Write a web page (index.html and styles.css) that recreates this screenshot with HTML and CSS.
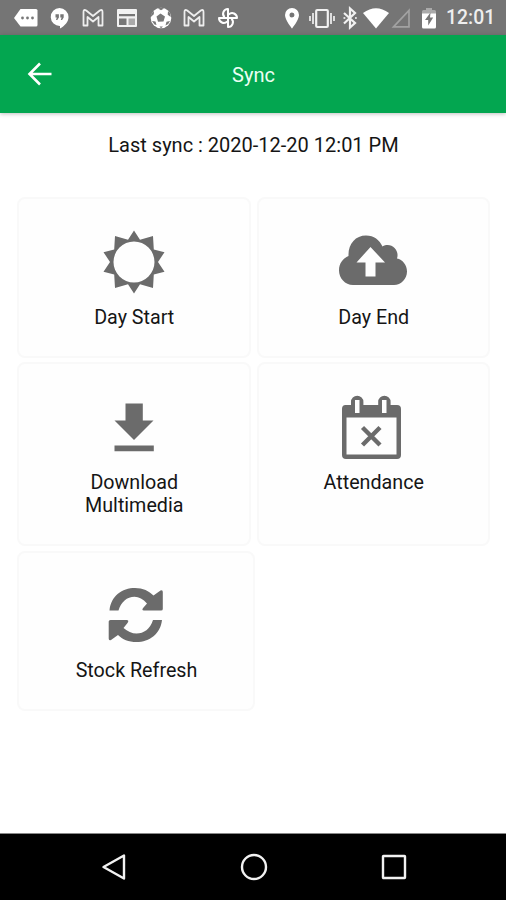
FILE: index.html
```html
<!DOCTYPE html>
<html lang="en">
<head>
<meta charset="utf-8">
<title>Sync</title>
<link rel="stylesheet" href="styles.css">
</head>
<body>
<div class="screen">
  <div class="status-bar">
    <div class="notifications">
      <svg width="24" height="24" viewBox="0 0 24 24"><path fill="#fff" d="M6.500 3H22Q23.500 3 23.500 4.500V19Q23.500 20.500 22 20.500H6.500L0 12Z"/><g fill="#777"><circle cx="8.500" cy="12" r="1.400"/><circle cx="13.500" cy="12" r="1.400"/><circle cx="18.500" cy="12" r="1.400"/></g></svg>
      <svg width="24" height="24" viewBox="0 0 24 24"><path fill="#fff" d="M11.500 2a9 9 0 0 1 9 9c0 4.700-3.500 8.700-8.500 11.500v-2.500a9 9 0 1 1-.5-18Z"/><path fill="#777" d="M7.500 8.200h3.400v3.400l-1.600 2.500H8l.8-2.500H7.500zM12.300 8.200h3.400v3.400l-1.600 2.500h-1.300l.8-2.500h-1.300z"/></svg>
      <svg width="24" height="24" viewBox="0 0 24 24"><path class="mail" d="M2.500 19.500V6Q2.500 3 5.200 4.500L12 10l6.800-5.500Q21.500 3 21.500 6v13.500h-4V11L12 15.500 6.500 11v8.500Z"/></svg>
      <svg width="24" height="24" viewBox="0 0 24 24"><path fill="#f2f2f2" d="M3 3h18q1 0 1 1v16q0 1-1 1H3q-1 0-1-1V4q0-1 1-1Z"/><path fill="#777" d="M4 8h16v2.200H4zM4 12.500h7.500V19H4z"/><path fill="#aaa" d="M13.500 12.500H20V19h-6.500z"/></svg>
      <svg width="24" height="24" viewBox="0 0 24 24"><circle cx="12" cy="12" r="10.300" fill="#fff"/><path fill="#777" d="M7.500 10.500l4-3 4.500 3-1.500 5-5.500.300zM9 2.500l3 1.800 3-1.800-3-.7zM19 5l-.3 3.800 3 2.200-.4-3.500zM5 5l-.2 3.200L1.800 11l.6-3.500zM3 15l3.500.5 1 3.500-2-.5zM21 15l-3.500.7-1 3.800 2.700-1.500zM10.500 20.500h3.500l-2 1.700z"/></svg>
      <svg width="24" height="24" viewBox="0 0 24 24"><path class="mail" d="M2.500 19.500V6Q2.500 3 5.200 4.500L12 10l6.800-5.500Q21.500 3 21.500 6v13.500h-4V11L12 15.500 6.500 11v8.500Z"/></svg>
      <svg width="24" height="24" viewBox="0 0 24 24"><g class="pinwheel"><path d="M12 12V3A4.800 4.800 0 0 0 8.500 11.200"/><path d="M12 12h9A4.800 4.800 0 0 0 12.800 8.500"/><path d="M12 12v9a4.800 4.800 0 0 0 3.500-8.200"/><path d="M12 12H3a4.800 4.800 0 0 0 8.200 3.500"/></g></svg>
    </div>
    <div class="indicators">
      <svg width="16" height="24" viewBox="0 0 16 24"><path fill="#fff" fill-rule="evenodd" d="M8 2a7 7 0 0 1 7 7c0 5-7 13.500-7 13.500S1 14 1 9a7 7 0 0 1 7-7Zm0 4.500a2.500 2.500 0 1 0 0 5 2.500 2.500 0 0 0 0-5Z"/></svg>
      <svg class="vibrate" width="28" height="24" viewBox="0 0 28 24"><rect x="8.200" y="4" width="11.600" height="17" rx="1" fill="none" stroke="#f2f2f2" stroke-width="2.200"/><path d="M5 7v11M23 7v11M2 10v5M26 10v5" stroke="#ddd" stroke-width="2" fill="none"/></svg>
      <svg class="bluetooth" width="16" height="24" viewBox="0 0 16 24"><path d="M2 7l11 10-5 4.500V2.500L13 7 2 17.500" fill="none" stroke="#f2f2f2" stroke-width="2.200"/><path d="M1.500 12h1.800M13 12h1.800" stroke="#ddd" stroke-width="2"/></svg>
      <svg class="wifi" width="26" height="24" viewBox="0 0 26 24"><path fill="#fff" d="M0 7Q13-2.500 26 7L13 22.500Z"/></svg>
      <svg class="signal" width="20" height="24" viewBox="0 0 20 24"><path d="M2.500 20.800L18 4.500v16.300z" fill="none" stroke="#a2a2a2" stroke-width="1.700"/></svg>
      <svg class="battery" width="16" height="24" viewBox="0 0 16 24"><path fill="#aaa" d="M1 8V5.500Q1 4 2.500 4H5V2h6v2h2.500Q15 4 15 5.500V8z"/><path fill="#fff" d="M1 7.500h14V21q0 1.500-1.500 1.500h-11Q1 22.500 1 21z"/><path fill="#777" d="M9.500 6.500L4 14h3.200v5.500l5-8H9z"/></svg>
      <span class="clock">12:01</span>
    </div>
  </div>

  <header class="app-bar">
    <svg class="back" width="26" height="26" viewBox="0 0 26 26"><path d="M24.500 13H3M13 2.500L2.500 13 13 23.500" fill="none" stroke="#fff" stroke-width="2.600"/></svg>
    <h1>Sync</h1>
  </header>

  <main>
    <p class="last-sync">Last sync : 2020-12-20 12:01 PM</p>
    <div class="row">
      <div class="card">
        <svg width="64" height="64" viewBox="-32 -32 64 64"><path fill="#6b6b6b" fill-rule="evenodd" d="M0-31.500L6-22.300 19-26 19.800-12.500 30.500-9.800 24 0 30.500 9.800 19.800 12.500 19 26 6 22.300 0 31.500-6 22.300-19 26-19.800 12.500-30.500 9.800-24 0-30.500-9.800-19.800-12.500-19-26-6-22.300ZM0-20.500a20.500 20.500 0 1 0 0 41 20.500 20.500 0 0 0 0-41Z"/></svg>
        <span>Day Start</span>
      </div>
      <div class="card">
        <svg class="cloud" width="68" height="64" viewBox="0 0 68 64"><path fill="#6b6b6b" fill-rule="evenodd" d="M14 55C6 55 0 48 0 40.500 0 33 4 28.500 9.500 26 9 14 16.500 5.500 27 5.500c8 0 13.500 4.500 16.500 11 8-5 17.500 3 14.500 12 5.500 1 10 6.500 10 13C68 49 62 55 55 55ZM31.500 17L17.500 32.500h9V46.500h10V32.500h9.500Z"/></svg>
        <span>Day End</span>
      </div>
    </div>
    <div class="row row-tall">
      <div class="card">
        <svg width="64" height="64" viewBox="0 0 64 64"><path fill="#6b6b6b" d="M23.500 8.500h17.300v17H51.500L32 45 12.500 25.500h11zM12.500 50.500h39.300v5.700H12.500z"/></svg>
        <span>Download<br>Multimedia</span>
      </div>
      <div class="card">
        <svg class="calendar" width="64" height="66" viewBox="0 0 64 66"><path fill="#6b6b6b" fill-rule="evenodd" d="M5.500 11H11V8a6.200 6.200 0 0 1 12.400 0v3h14.800V8a6.200 6.200 0 0 1 12.400 0v3H57q4 0 4 4v46q0 4-4 4H6q-4 0-4-4V15q0-4 3.500-4ZM6.500 23.500v37h50v-37zM15 6v13h4.500V6zM42 6v13h4.500V6z"/><path d="M22.500 33.500L40 51M40 33.500L22.500 51" stroke="#6b6b6b" stroke-width="4.400"/></svg>
        <span>Attendance</span>
      </div>
    </div>
    <div class="row row-last">
      <div class="card">
        <svg width="64" height="64" viewBox="0 0 64 64"><path fill="#6b6b6b" d="M5.500 27.500C7 13 18 5 31 5c8 0 14 3 18.500 7.500L56.500 7.500Q58.800 6.500 58.800 9V26Q58.800 27.500 57 27.500H40Q37 27.500 39.500 24.500L43 20.500C39 16 35 13.800 30.500 13.800 23 13.800 17 19 14.500 27.500ZM58 37C56.500 51 45.500 59 32.500 59c-8 0-14-2.500-18.500-7L7 57Q4.700 58 4.700 55.500V38.500Q4.700 37 6.500 37H22.500Q25.500 37 23.500 40L19.500 45C23.500 48.500 28 50.500 32.500 50.500 40 50.500 46 46 49 37Z"/></svg>
        <span>Stock Refresh</span>
      </div>
    </div>
  </main>

  <nav class="nav-bar">
    <svg width="28" height="28" viewBox="0 0 28 28"><path d="M24 2.500v23L3.500 14z"/></svg>
    <svg width="28" height="28" viewBox="0 0 28 28"><circle cx="14" cy="14" r="12"/></svg>
    <svg width="28" height="28" viewBox="0 0 28 28"><rect x="3" y="3" width="22" height="22" rx=".5"/></svg>
  </nav>
</div>
</body>
</html>
```
FILE: styles.css
```css
* { box-sizing: border-box; }
body { margin: 0; background: #fff; font-family: Roboto, "Liberation Sans", sans-serif; color: #151515; }
svg { display: block; flex: none; }
.screen { width: 506px; height: 900px; display: flex; flex-direction: column; overflow: hidden; }
.status-bar { height: 35px; background: #757575; display: flex; justify-content: space-between; align-items: center; padding: 0 11px 0 14px; }
.notifications { display: flex; gap: 9.7px; }
.indicators { display: flex; align-items: center; }
.vibrate { margin-left: 8px; }
.bluetooth { margin-left: 6px; }
.wifi { margin-left: 5px; }
.signal { margin-left: 2px; }
.battery { margin-left: 10px; }
.clock { margin-left: 9px; width: 49px; padding-top: 1px; color: #eee; font-size: 19.4px; line-height: 24px; font-weight: 500; white-space: nowrap; }
.mail { fill: none; stroke: #eee; stroke-width: 1.8; stroke-linejoin: round; }
.pinwheel { fill: none; stroke: #fff; stroke-width: 2; stroke-linejoin: round; }
.app-bar { height: 78px; background: #03a650; display: grid; grid-template-columns: 80px 1fr 80px; align-items: center; box-shadow: 0 1px 4px rgba(0, 0, 0, .25); }
.back { margin-left: 27px; }
h1 { margin: 2px 0 0 1px; text-align: center; font-size: 20px; line-height: 24px; font-weight: 400; color: #ecfff3; }
main { flex: 1; padding: 20px 16px 0 17px; }
.last-sync { margin: 0 0 40px; text-align: center; font-size: 20px; line-height: 24px; }
.row { display: grid; grid-template-columns: 1fr 1fr; gap: 6px; height: 161px; margin-bottom: 4px; }
.row-tall { height: 184px; margin-bottom: 5px; }
.row-last { grid-template-columns: 238px; height: 160px; }
.card { border: 2px solid #f9f9f9; border-radius: 8px; background: #fefefe; display: flex; flex-direction: column; align-items: center; padding-top: 31px; font-size: 19.7px; line-height: 23px; text-align: center; }
.card span { margin: 12px 0 0 1px; }
.cloud { margin-right: 1px; }
.calendar { margin: -1px 3px -1px 0; }
.row-last .card { padding-top: 30px; }
.nav-bar { height: 67px; background: #000; border-top: 1px solid #888; display: flex; justify-content: space-between; align-items: center; padding: 0 98px 0 100px; }
.nav-bar svg { fill: none; stroke: #f2f2f2; stroke-width: 2.4; stroke-linejoin: round; }
```
